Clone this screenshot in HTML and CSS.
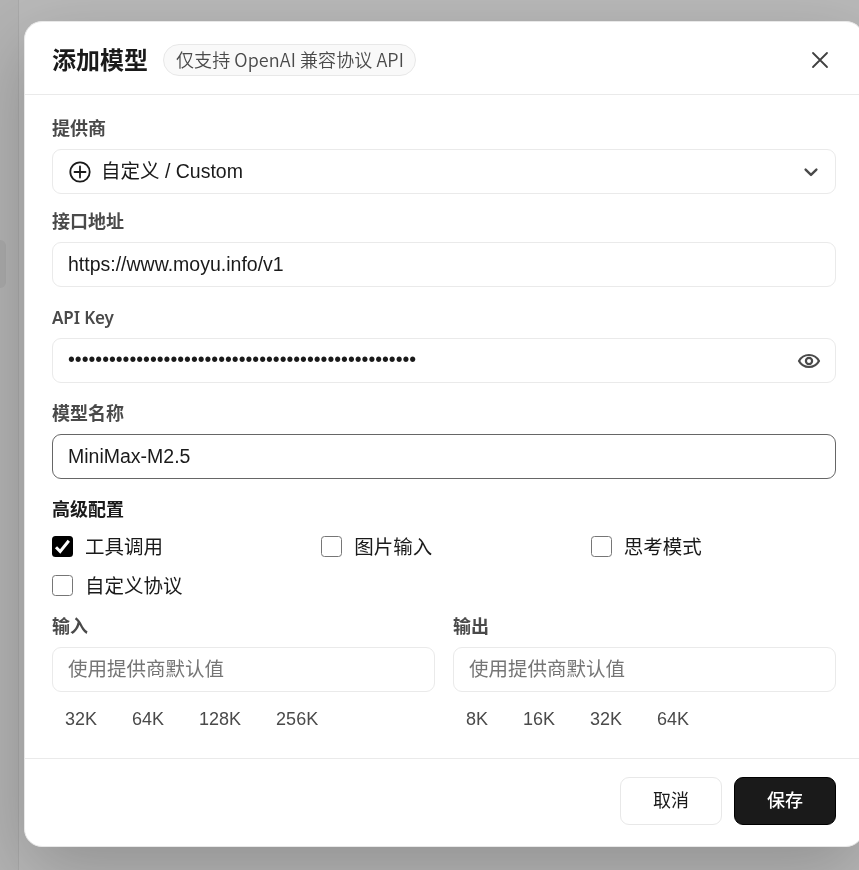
FILE: index.html
```html
<!DOCTYPE html>
<html lang="zh-CN">
<head>
<meta charset="utf-8">
<title>添加模型</title>
<link rel="stylesheet" href="styles.css">
</head>
<body>
<div class="app">
  <aside class="sidebar"><div class="sidebar-item"></div></aside>
  <main class="content"></main>
</div>
<div class="overlay">
  <section class="modal" role="dialog">
    <header class="modal-header">
      <h2 class="title">添加模型</h2>
      <span class="pill">仅支持 OpenAI 兼容协议 API</span>
      <svg class="close" width="18" height="18" viewBox="0 0 18 18"><path d="M2 2l14 14M16 2l-14 14"/></svg>
    </header>
    <div class="modal-body">
      <div class="field field-provider">
        <div class="label">提供商</div>
        <div class="control">
          <svg class="plus" width="24" height="24" viewBox="0 0 24 24"><circle cx="12" cy="12" r="9.7"/><path d="M12 6.5v11M6.5 12h11"/></svg>
          <span class="value">自定义 / Custom</span>
          <svg class="chevron" width="16" height="10" viewBox="0 0 16 10"><path d="M2.6 2.600L8 7.900L13.400 2.600"/></svg>
        </div>
      </div>
      <div class="field">
        <div class="label">接口地址</div>
        <div class="control"><span class="value">https://www.moyu.info/v1</span></div>
      </div>
      <div class="field">
        <div class="label latin">API Key</div>
        <div class="control">
          <span class="value secret">•••••••••••••••••••••••••••••••••••••••••••••••••••</span>
          <svg class="eye" width="24" height="20" viewBox="0 0 24 20"><path d="M2 10C4.200 6 7.800 4 12 4S19.800 6 22 10C19.800 14 16.200 16 12 16S4.200 14 2 10Z"/><circle cx="12" cy="10" r="3.100"/></svg>
        </div>
      </div>
      <div class="field">
        <div class="label">模型名称</div>
        <div class="control focused"><span class="value">MiniMax-M2.5</span></div>
      </div>
      <div class="label section">高级配置</div>
      <div class="checks">
        <div class="check"><span class="box checked"><svg width="21" height="21" viewBox="0 0 21 21"><path d="M4 11.200l4.200 4.300L16.800 4.800"/></svg></span><span class="check-text">工具调用</span></div>
        <div class="check"><span class="box"></span><span class="check-text">图片输入</span></div>
        <div class="check"><span class="box"></span><span class="check-text">思考模式</span></div>
        <div class="check"><span class="box"></span><span class="check-text">自定义协议</span></div>
      </div>
      <div class="limits">
        <div class="limit">
          <div class="label">输入</div>
          <div class="control"><span class="value placeholder">使用提供商默认值</span></div>
          <div class="chips"><span>32K</span><span>64K</span><span>128K</span><span>256K</span></div>
        </div>
        <div class="limit">
          <div class="label">输出</div>
          <div class="control"><span class="value placeholder">使用提供商默认值</span></div>
          <div class="chips"><span>8K</span><span>16K</span><span>32K</span><span>64K</span></div>
        </div>
      </div>
    </div>
    <footer class="modal-footer">
      <button class="btn">取消</button>
      <button class="btn primary">保存</button>
    </footer>
  </section>
</div>
</body>
</html>
```
FILE: styles.css
```css
* { box-sizing: border-box; }
body {
  margin: 0;
  height: 870px;
  overflow: hidden;
  color: #1a1a1a;
  font-family: "Noto Sans CJK SC", sans-serif;
}
.app { display: flex; height: 870px; background: #b9b9b9; }
.sidebar { width: 19px; padding-top: 240px; background: #b3b3b3; border-right: 1px solid #a9a9a9; }
.sidebar-item { width: 6px; height: 48px; background: #aaa; border-radius: 0 6px 6px 0; }
.content { flex: 1; }
.overlay { position: fixed; inset: 0; padding: 21px 0 0 24px; }
.modal {
  width: 840px;
  height: 826px;
  display: flex;
  flex-direction: column;
  background: #fff;
  border: 1px solid #e8e8e8;
  border-radius: 18px;
  box-shadow: 0 24px 72px rgba(0, 0, 0, .22);
}
.modal-header {
  display: flex;
  align-items: center;
  height: 73px;
  padding: 4px 34px 0 27px;
  border-bottom: 1px solid #eaeaea;
}
.title { margin: 0; padding-bottom: 2px; font-size: 24px; line-height: 36px; font-weight: 700; }
.pill {
  width: 253px;
  height: 32px;
  margin-left: 15px;
  padding: 0 12px;
  border: 1px solid #e8e8e8;
  border-radius: 16px;
  background: #f9f9f9;
  color: #4a4a4a;
  font-size: 18px;
  font-weight: 350;
  line-height: 29px;
  letter-spacing: .08px;
  white-space: nowrap;
}
svg { fill: none; stroke: #4a4a4a; stroke-width: 2; stroke-linecap: round; stroke-linejoin: round; flex: none; }
.close { margin-left: auto; stroke-width: 1.8; stroke: #404040; }
.modal-body { flex: 1; padding: 20px 27px 0; }
.field { margin-bottom: 17px; }
.field-provider { margin-bottom: 14px; }
.label { height: 27px; margin-bottom: 7px; font-size: 18px; line-height: 24px; font-weight: 700; color: #4a4a4a; }
.latin { font-family: "Noto Sans", "Noto Sans CJK SC", sans-serif; font-size: 17px; font-weight: 600; line-height: 27px; letter-spacing: -.1px; }
.section { margin-bottom: 10px; color: #1a1a1a; }
.control {
  display: flex;
  align-items: center;
  height: 45px;
  padding: 0 15px;
  border: 1px solid #eaeaea;
  border-radius: 9px;
}
.focused { border-color: #666; }
.value { font: 19.5px/29px "Liberation Sans", "Noto Sans CJK SC", sans-serif; white-space: nowrap; }
.secret { padding-bottom: 2px; }
.placeholder { color: #757575; }
.plus { stroke: #1a1a1a; stroke-width: 1.8; margin-right: 9px; }
.chevron { margin-left: auto; margin-right: 1px; stroke-width: 2.4; }
.eye { margin-left: auto; margin-right: -1px; stroke-width: 2.200; }
.checks { display: grid; grid-template-columns: repeat(3, 1fr); column-gap: 24px; row-gap: 12px; margin-bottom: 14px; }
.check { display: flex; align-items: center; gap: 12px; height: 27px; font-size: 19.5px; }
.check-text { padding-bottom: 2px; }
.box { width: 21px; height: 21px; border: 1px solid #767676; border-radius: 3.5px; flex: none; }
.checked { border: 0; background: #000; }
.checked svg { display: block; stroke: #fff; stroke-width: 3; stroke-linecap: butt; stroke-linejoin: miter; }
.limits { display: grid; grid-template-columns: 1fr 1fr; gap: 18px; }
.chips { display: flex; gap: 9px; margin-top: 9px; font: 18px/36px "Liberation Sans", sans-serif; color: #4a4a4a; }
.chips span { padding: 0 13px; }
.modal-footer {
  display: flex;
  justify-content: flex-end;
  gap: 12px;
  height: 88px;
  padding: 18px 27px 0;
  border-top: 1px solid #eaeaea;
}
.btn {
  width: 102px;
  height: 48px;
  padding: 0 0 4px;
  background: #fff;
  border: 1px solid #e8e8e8;
  border-radius: 9px;
  color: #1a1a1a;
  font: 400 18px "Noto Sans CJK SC", sans-serif;
}
.primary { background: #1a1a1a; border-color: #000; color: #fff; font-weight: 500; }
```
